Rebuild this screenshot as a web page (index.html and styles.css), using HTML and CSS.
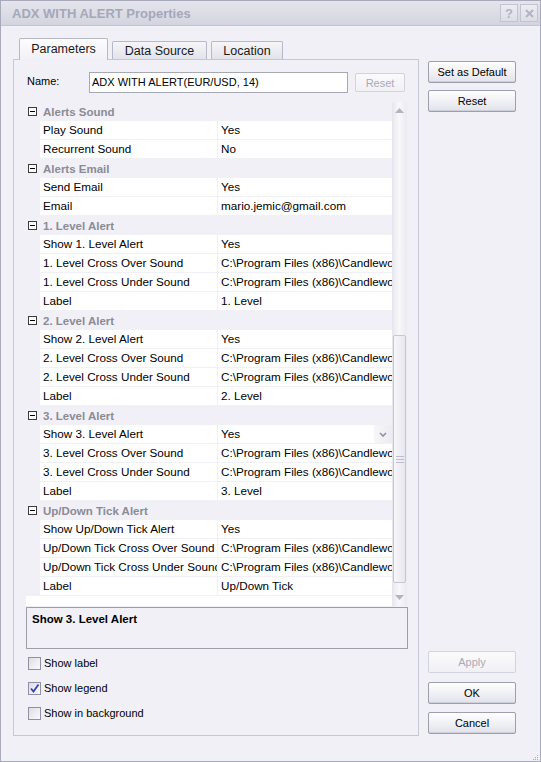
FILE: index.html
```html
<!DOCTYPE html>
<html>
<head>
	<meta charset="utf-8">
	<title>ADX WITH ALERT Properties</title>
	<link rel="stylesheet" href="styles.css">
</head>
<body>
	<div class="window">
		<!-- caption -->
		<div class="titlebar">
			<span class="title">ADX WITH ALERT Properties</span>
			<div class="cap-btns">
				<span class="cap-btn">?</span>
				<span class="cap-btn">
					<svg width="9" height="9" viewBox="0 0 9 9"><path d="M1 1L8 8M8 1L1 8" stroke="#b2b3c3" stroke-width="2"/></svg>
				</span>
			</div>
		</div>

		<div class="client">
			<div class="main">
				<div class="tabs">
					<div class="tab active tab-params">Parameters</div>
					<div class="tab tab-source">Data Source</div>
					<div class="tab tab-location">Location</div>
				</div>

				<div class="panel">
					<div class="name-row">
						<span class="name-label">Name:</span>
						<div class="name-input">ADX WITH ALERT(EUR/USD, 14)</div>
						<div class="btn btn-small disabled">Reset</div>
					</div>

					<!-- property grid -->
					<div class="grid">
						<div class="rows">
							<div class="cat"><svg class="toggle" width="9" height="9" viewBox="0 0 9 9"><rect x="0.5" y="0.5" width="8" height="8" fill="#fff" stroke="#3c3c3c"/><path d="M2 4.5H7" stroke="#000"/></svg>Alerts Sound</div>
							<div class="prop"><div class="pname">Play Sound</div><div class="pval">Yes</div></div>
							<div class="prop"><div class="pname">Recurrent Sound</div><div class="pval">No</div></div>

							<div class="cat"><svg class="toggle" width="9" height="9" viewBox="0 0 9 9"><rect x="0.5" y="0.5" width="8" height="8" fill="#fff" stroke="#3c3c3c"/><path d="M2 4.5H7" stroke="#000"/></svg>Alerts Email</div>
							<div class="prop"><div class="pname">Send Email</div><div class="pval">Yes</div></div>
							<div class="prop"><div class="pname">Email</div><div class="pval">mario.jemic@gmail.com</div></div>

							<div class="cat"><svg class="toggle" width="9" height="9" viewBox="0 0 9 9"><rect x="0.5" y="0.5" width="8" height="8" fill="#fff" stroke="#3c3c3c"/><path d="M2 4.5H7" stroke="#000"/></svg>1. Level Alert</div>
							<div class="prop"><div class="pname">Show 1. Level Alert</div><div class="pval">Yes</div></div>
							<div class="prop"><div class="pname">1. Level Cross Over Sound</div><div class="pval">C:\Program Files (x86)\Candleworks\FXTS2\Sounds\alert.wav</div></div>
							<div class="prop"><div class="pname">1. Level Cross Under Sound</div><div class="pval">C:\Program Files (x86)\Candleworks\FXTS2\Sounds\alert.wav</div></div>
							<div class="prop"><div class="pname">Label</div><div class="pval">1. Level</div></div>

							<div class="cat"><svg class="toggle" width="9" height="9" viewBox="0 0 9 9"><rect x="0.5" y="0.5" width="8" height="8" fill="#fff" stroke="#3c3c3c"/><path d="M2 4.5H7" stroke="#000"/></svg>2. Level Alert</div>
							<div class="prop"><div class="pname">Show 2. Level Alert</div><div class="pval">Yes</div></div>
							<div class="prop"><div class="pname">2. Level Cross Over Sound</div><div class="pval">C:\Program Files (x86)\Candleworks\FXTS2\Sounds\alert.wav</div></div>
							<div class="prop"><div class="pname">2. Level Cross Under Sound</div><div class="pval">C:\Program Files (x86)\Candleworks\FXTS2\Sounds\alert.wav</div></div>
							<div class="prop"><div class="pname">Label</div><div class="pval">2. Level</div></div>

							<div class="cat"><svg class="toggle" width="9" height="9" viewBox="0 0 9 9"><rect x="0.5" y="0.5" width="8" height="8" fill="#fff" stroke="#3c3c3c"/><path d="M2 4.5H7" stroke="#000"/></svg>3. Level Alert</div>
							<div class="prop"><div class="pname">Show 3. Level Alert</div><div class="pval with-drop"><span class="pval-text">Yes</span><span class="drop"><svg width="8" height="5" viewBox="0 0 8 5"><path d="M1 1L4 4L7 1" fill="none" stroke="#8f90a6" stroke-width="1.6"/></svg></span></div></div>
							<div class="prop"><div class="pname">3. Level Cross Over Sound</div><div class="pval">C:\Program Files (x86)\Candleworks\FXTS2\Sounds\alert.wav</div></div>
							<div class="prop"><div class="pname">3. Level Cross Under Sound</div><div class="pval">C:\Program Files (x86)\Candleworks\FXTS2\Sounds\alert.wav</div></div>
							<div class="prop"><div class="pname">Label</div><div class="pval">3. Level</div></div>

							<div class="cat"><svg class="toggle" width="9" height="9" viewBox="0 0 9 9"><rect x="0.5" y="0.5" width="8" height="8" fill="#fff" stroke="#3c3c3c"/><path d="M2 4.5H7" stroke="#000"/></svg>Up/Down Tick Alert</div>
							<div class="prop"><div class="pname">Show Up/Down Tick Alert</div><div class="pval">Yes</div></div>
							<div class="prop"><div class="pname">Up/Down Tick Cross Over Sound</div><div class="pval">C:\Program Files (x86)\Candleworks\FXTS2\Sounds\alert.wav</div></div>
							<div class="prop"><div class="pname">Up/Down Tick Cross Under Sound</div><div class="pval">C:\Program Files (x86)\Candleworks\FXTS2\Sounds\alert.wav</div></div>
							<div class="prop"><div class="pname">Label</div><div class="pval">Up/Down Tick</div></div>
							<div class="rows-fill"></div>
						</div>

						<div class="scrollbar">
							<div class="sb-arrow"><svg width="9" height="5" viewBox="0 0 9 5"><path d="M0 5L4.5 0L9 5Z" fill="#b3b3c6"/></svg></div>
							<div class="sb-before"></div>
							<div class="sb-thumb">
								<svg width="8" height="7" viewBox="0 0 8 7"><path d="M0 0.5H8M0 3.5H8M0 6.5H8" stroke="#bcbccc"/></svg>
							</div>
							<div class="sb-after"></div>
							<div class="sb-arrow"><svg width="9" height="5" viewBox="0 0 9 5"><path d="M0 0L4.5 5L9 0Z" fill="#b3b3c6"/></svg></div>
						</div>
					</div>

					<div class="desc">Show 3. Level Alert</div>

					<div class="checks">
						<label class="check"><span class="box"></span>Show label</label>
						<label class="check"><span class="box"><svg width="11" height="11" viewBox="0 0 11 11"><path d="M2 5.5L4.5 8.5L9.5 1.5" fill="none" stroke="#3346a8" stroke-width="1.8"/></svg></span>Show legend</label>
						<label class="check"><span class="box"></span>Show in background</label>
					</div>
				</div>
			</div>

			<!-- right hand buttons -->
			<div class="side">
				<div class="btn">Set as Default</div>
				<div class="btn btn-gap">Reset</div>
				<div class="btn disabled btn-apply">Apply</div>
				<div class="btn btn-ok">OK</div>
				<div class="btn btn-cancel">Cancel</div>
			</div>
		</div>

		<svg class="grip" width="6" height="6" viewBox="0 0 6 6"><path d="M4 1h1v1h-1zM2 3h1v1h-1zM4 3h1v1h-1zM0 5h1v1h-1zM2 5h1v1h-1zM4 5h1v1h-1z" fill="#a9aab9"/></svg>
	</div>
</body>
</html>
```

FILE: styles.css
```css
body {
	margin: 0;
	background: #ffffff;
	font-family: "Liberation Sans", Arial, sans-serif;
	color: #000;
}

.window {
	position: relative;
	width: 541px;
	height: 762px;
	box-sizing: border-box;
	border: 1px solid #a9aab9;
	background: #f1f0f7;
	display: flex;
	flex-direction: column;
}

/* caption bar */
.titlebar {
	flex: none;
	height: 25px;
	display: flex;
	align-items: center;
	padding: 0 2px 0 11px;
	background: linear-gradient(#e4e5ec, #d3d4df);
	border-bottom: 1px solid #c3c4d2;
	box-sizing: border-box;
}
.title {
	flex: 1;
	font-weight: bold;
	font-size: 13px;
	color: #a5a7b9;
}
.cap-btns {
	display: flex;
	gap: 2px;
}
.cap-btn {
	width: 18px;
	height: 18px;
	box-sizing: border-box;
	border: 1px solid #c2c3d1;
	background: linear-gradient(#ececf2, #dcdde6);
	display: flex;
	align-items: center;
	justify-content: center;
	font-weight: bold;
	font-size: 13px;
	color: #b2b3c3;
}

.client {
	flex: 1;
	display: flex;
	padding: 12px 0 0 12px;
}
.main {
	width: 406px;
	display: flex;
	flex-direction: column;
}

/* tabs */
.tabs {
	height: 22px;
	display: flex;
	align-items: flex-end;
	padding-left: 6px;
	gap: 4px;
	margin-bottom: -1px;
	position: relative;
	z-index: 1;
}
.tab {
	height: 18px;
	margin-bottom: 1px;
	box-sizing: border-box;
	border: 1px solid #b7b8c8;
	border-bottom: none;
	border-radius: 2px 2px 0 0;
	background: linear-gradient(#f6f6f9, #e2e2ea);
	font-size: 12.5px;
	display: flex;
	align-items: center;
	justify-content: center;
	color: #1a1a1a;
}
.tab.active {
	height: 22px;
	margin-bottom: 0;
	background: linear-gradient(#fdfdfe, #f1f0f7);
	padding-bottom: 1px;
}
.tab-params { width: 89px; }
.tab-source { width: 95px; }
.tab-location { width: 72px; }

.panel {
	height: 677px;
	box-sizing: border-box;
	border: 1px solid #c6c7d4;
	background: #f1f0f7;
	padding: 12px 0 0 12px;
	display: flex;
	flex-direction: column;
}

.name-row {
	height: 21px;
	display: flex;
	align-items: center;
	font-size: 11px;
}
.name-label {
	width: 62px;
	padding-left: 1px;
	margin-top: -3px;
}
.name-input {
	width: 259px;
	height: 21px;
	box-sizing: border-box;
	border: 1px solid #a7a8b6;
	background: #fff;
	padding-left: 2px;
	line-height: 19px;
}

/* buttons */
.btn {
	height: 22px;
	box-sizing: border-box;
	border: 1px solid #9d9eae;
	border-radius: 2px;
	background: linear-gradient(#fefefe, #f1f1f5 50%, #e2e3ea);
	box-shadow: inset 0 -1px 0 #cfd0db;
	font-size: 11px;
	display: flex;
	align-items: center;
	justify-content: center;
}
.btn.disabled {
	border-color: #d2d3dd;
	color: #a9aab4;
	box-shadow: none;
	background: linear-gradient(#fbfbfd, #f0f0f5);
}
.btn-small {
	width: 50px;
	height: 19px;
	margin-left: 7px;
}

/* property grid */
.grid {
	margin-top: 9px;
	width: 381px;
	height: 504px;
	display: flex;
}
.rows {
	width: 366px;
	display: flex;
	flex-direction: column;
	background: #fff;
}
.cat {
	flex: none;
	height: 19px;
	display: flex;
	align-items: center;
	background: #f1f0f7;
	font-weight: bold;
	font-size: 11.5px;
	color: #8b8b95;
}
.toggle {
	margin: 0 6px 0 2px;
}
.prop {
	flex: none;
	height: 19px;
	display: flex;
	background: #f1f0f7;
	font-size: 11.7px;
}
.pname,
.pval {
	height: 18px;
	line-height: 18px;
	background: #fff;
	padding-left: 3px;
	box-sizing: border-box;
	white-space: nowrap;
	overflow: hidden;
}
.pname {
	width: 177px;
	margin-left: 14px;
}
.pval {
	width: 174px;
	margin-left: 1px;
}
.with-drop {
	display: flex;
	padding-right: 0;
}
.pval-text {
	flex: 1;
}
.drop {
	width: 18px;
	display: flex;
	align-items: center;
	justify-content: center;
	background: linear-gradient(to right, #f7f7fa, #ebebf1);
}
.rows-fill {
	flex: 1;
}

.scrollbar {
	width: 15px;
	display: flex;
	flex-direction: column;
	background: linear-gradient(to right, #e5e5ed, #f8f8fb 45%, #eaeaf1);
}
.sb-arrow {
	height: 17px;
	display: flex;
	align-items: center;
	justify-content: center;
}
.sb-before {
	height: 216px;
}
.sb-thumb {
	height: 248px;
	margin: 0 1px;
	box-sizing: border-box;
	border: 1px solid #c6c6d4;
	border-radius: 2px;
	background: linear-gradient(to right, #f7f7fa, #e7e7ef);
	display: flex;
	align-items: center;
	justify-content: center;
}
.sb-after {
	flex: 1;
}

.desc {
	margin-top: 1px;
	width: 382px;
	height: 42px;
	box-sizing: border-box;
	border: 1px solid #9d9ea9;
	padding: 5px 0 0 5px;
	font-weight: bold;
	font-size: 11.5px;
}

.checks {
	margin-top: 2px;
	display: flex;
	flex-direction: column;
	gap: 1px;
}
.check {
	height: 24px;
	display: flex;
	align-items: center;
	padding-left: 2px;
	font-size: 11px;
}
.box {
	width: 13px;
	height: 13px;
	box-sizing: border-box;
	border: 1px solid #8f90a2;
	background: linear-gradient(135deg, #dcdce6, #fbfbfd);
	margin-right: 3px;
	display: flex;
	align-items: center;
	justify-content: center;
}

/* right column */
.side {
	width: 88px;
	margin-left: 9px;
	padding: 23px 0 27px;
	display: flex;
	flex-direction: column;
}
.btn-gap { margin-top: 7px; }
.btn-apply { margin-top: auto; }
.btn-ok { margin-top: 9px; }
.btn-cancel { margin-top: 8px; }

.grip {
	position: absolute;
	right: 1px;
	bottom: 1px;
}
```
